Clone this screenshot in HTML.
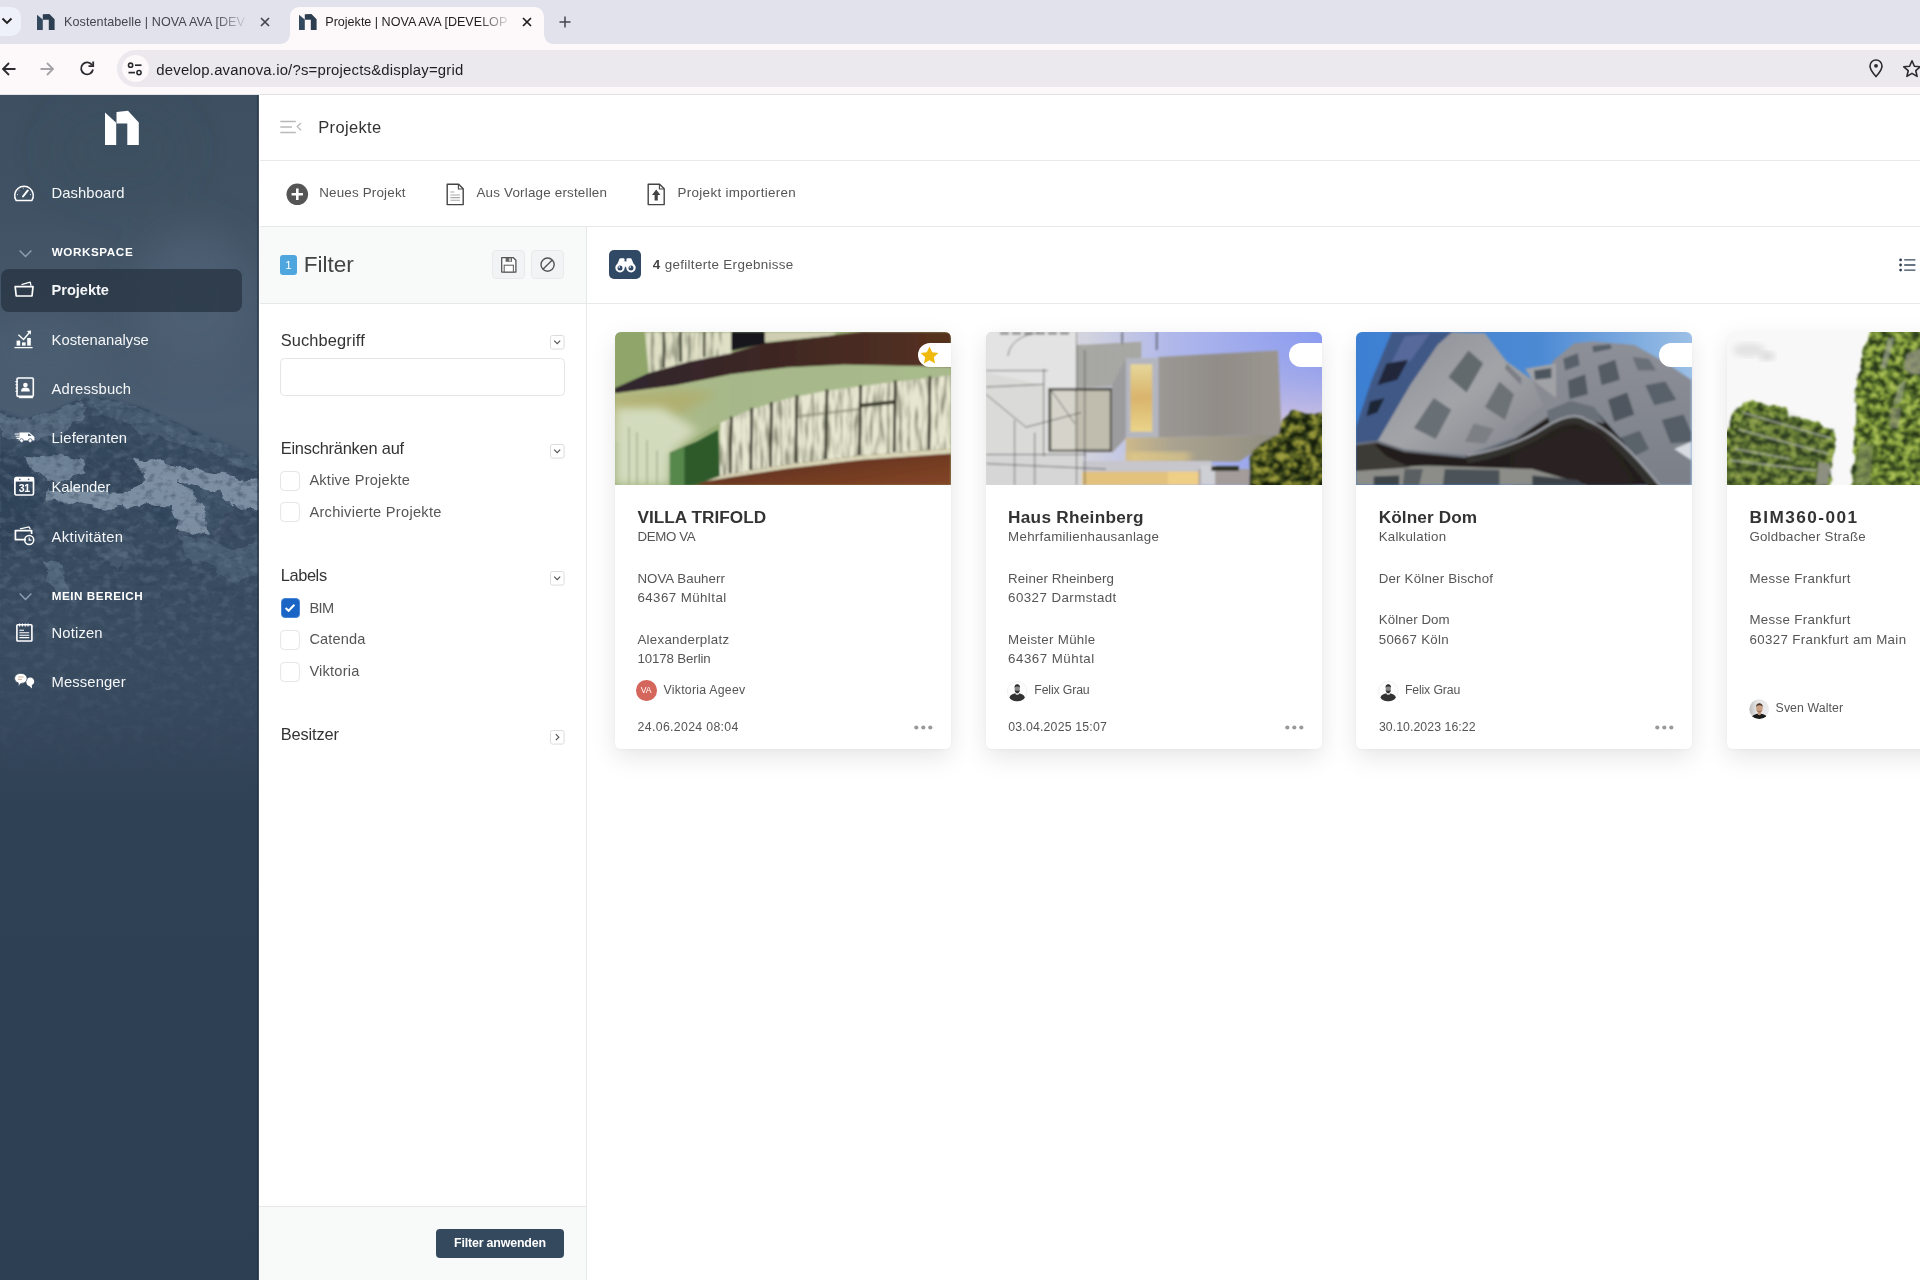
<!DOCTYPE html>
<html lang="de"><head><meta charset="utf-8"><title>Projekte | NOVA AVA [DEVELOP]</title>
<style>
*{box-sizing:border-box;margin:0;padding:0}
html,body{width:1920px;height:1280px;overflow:hidden;background:#fff}
body{position:relative;font-family:"Liberation Sans",sans-serif;color:#555}
.t{position:absolute;white-space:nowrap;line-height:1}
.a{position:absolute}
svg{position:absolute;overflow:visible}
#root{position:absolute;left:0;top:0;width:1920px;height:1280px;overflow:hidden;will-change:transform}

</style></head>
<body>
<div id="root">
<div class="a" style="left:0;top:0;width:1920px;height:44px;background:#e1e2ec"></div>
<div class="a" style="left:0;top:44px;width:1920px;height:51px;background:#fdf8fa;border-bottom:1px solid #e2e1e5"></div>
<div class="a" style="left:-20px;top:7px;width:41px;height:29px;border-radius:10px;background:#eef0fa"></div>
<svg style="left:1px;top:16px" width="12" height="10" viewBox="0 0 12 10"><path d="M1.5 2.5 L6 7 L10.5 2.5" fill="none" stroke="#1f1f1f" stroke-width="1.9"/></svg>
<svg style="left:280px;top:0" width="280" height="44" viewBox="0 0 280 44">
<path d="M0 44 C6 44 10 40 10 33 L10 17 C10 11 14 7 20 7 L254 7 C260 7 264 11 264 17 L264 33 C264 40 268 44 274 44 Z" fill="#fdf8fa"/></svg>
<svg style="left:37px;top:14px" width="18" height="16" viewBox="0 0 18 16">
<path d="M0 0.8 L5.8 5.6 L5.8 16 L0 16 Z" fill="#34495e"/>
<path d="M5.8 0.3 L12.4 0 L17.6 5.2 L17.6 16 L11.8 16 L11.8 5.8 L5.8 5.8 Z" fill="#2c3e50"/></svg>
<svg style="left:298.5px;top:14px" width="18" height="16" viewBox="0 0 18 16">
<path d="M0 0.8 L5.8 5.6 L5.8 16 L0 16 Z" fill="#34495e"/>
<path d="M5.8 0.3 L12.4 0 L17.6 5.2 L17.6 16 L11.8 16 L11.8 5.8 L5.8 5.8 Z" fill="#2c3e50"/></svg>
<div class="t" id="tab1" style="left:64.00px;top:16.00px;font-size:12.6px;font-weight:400;color:#44464d;letter-spacing:0.072px;">Kostentabelle | NOVA AVA [DEV</div>
<div class="a" style="left:215px;top:10px;width:34px;height:24px;background:linear-gradient(90deg,rgba(225,226,236,0),#e1e2ec)"></div>
<div class="t" id="tab2" style="left:325.30px;top:16.00px;font-size:12.6px;font-weight:400;color:#1f1f1f;letter-spacing:-0.017px;">Projekte | NOVA AVA [DEVELOP</div>
<div class="a" style="left:478px;top:10px;width:34px;height:24px;background:linear-gradient(90deg,rgba(253,248,250,0),#fdf8fa)"></div>
<svg style="left:260px;top:16.7px" width="10" height="10" viewBox="0 0 10 10"><path d="M1 1 L9 9 M9 1 L1 9" stroke="#44464d" stroke-width="1.7" fill="none"/></svg>
<svg style="left:521.7px;top:16.7px" width="10" height="10" viewBox="0 0 10 10"><path d="M1 1 L9 9 M9 1 L1 9" stroke="#1f1f1f" stroke-width="1.7" fill="none"/></svg>
<svg style="left:559px;top:16px" width="12" height="12" viewBox="0 0 12 12"><path d="M6 0.5 V11.5 M0.5 6 H11.5" stroke="#44464d" stroke-width="1.5" fill="none"/></svg>
<svg style="left:1px;top:61px" width="16" height="16" viewBox="0 0 16 16"><path d="M14.5 8 H2.5 M8 2 L2 8 L8 14" stroke="#2b2b2f" stroke-width="1.8" fill="none"/></svg>
<svg style="left:39px;top:61px" width="16" height="16" viewBox="0 0 16 16"><path d="M1.5 8 H13.5 M8 2 L14 8 L8 14" stroke="#a3a3a8" stroke-width="1.8" fill="none"/></svg>
<svg style="left:79px;top:60px" width="16" height="17" viewBox="0 0 16 17"><path d="M13.2 5.2 A6 6 0 1 0 14 9.5" stroke="#2b2b2f" stroke-width="1.8" fill="none"/><path d="M14.2 1.5 V6.2 H9.5" stroke="#2b2b2f" stroke-width="1.8" fill="none"/></svg>
<div class="a" style="left:117px;top:50px;width:1900px;height:37px;border-radius:18.5px;background:#ebe8ee"></div>
<div class="a" style="left:121.5px;top:55px;width:27px;height:27px;border-radius:50%;background:#fdf8fa"></div>
<svg style="left:127px;top:61px" width="16" height="16" viewBox="0 0 16 16">
<circle cx="3.6" cy="4.2" r="2.1" fill="none" stroke="#2b2b2f" stroke-width="1.6"/><path d="M8 4.2 H14.5" stroke="#2b2b2f" stroke-width="1.7"/>
<circle cx="12" cy="11.6" r="2.1" fill="none" stroke="#2b2b2f" stroke-width="1.6"/><path d="M1.5 11.6 H8" stroke="#2b2b2f" stroke-width="1.7"/></svg>
<div class="t" id="url" style="left:156.30px;top:63.00px;font-size:14.9px;font-weight:400;color:#1f1f1f;letter-spacing:0.194px;">develop.avanova.io/?s=projects&amp;display=grid</div>
<svg style="left:1869px;top:59px" width="14" height="19" viewBox="0 0 14 19">
<path d="M7 1 C3.6 1 1 3.6 1 7 C1 11 7 17.5 7 17.5 C7 17.5 13 11 13 7 C13 3.6 10.4 1 7 1 Z" fill="none" stroke="#2b2b2f" stroke-width="1.6"/><circle cx="7" cy="6.8" r="1.9" fill="#2b2b2f"/></svg>
<svg style="left:1902px;top:59px" width="20" height="19" viewBox="0 0 20 19">
<path d="M10 1.8 L12.4 7.2 L18.2 7.8 L13.8 11.7 L15.1 17.4 L10 14.4 L4.9 17.4 L6.2 11.7 L1.8 7.8 L7.6 7.2 Z" fill="none" stroke="#2b2b2f" stroke-width="1.6" stroke-linejoin="round"/></svg>
<svg style="left:0;top:95px;overflow:hidden" width="258.7" height="1185" viewBox="0 95 259 1185" preserveAspectRatio="none">
<defs>
<linearGradient id="sbg" gradientUnits="userSpaceOnUse" x1="0" y1="95" x2="0" y2="1280">
<stop offset="0" stop-color="#3d4f60"/><stop offset="0.08" stop-color="#3f5162"/><stop offset="0.2" stop-color="#46586b"/>
<stop offset="0.27" stop-color="#4b5e71"/><stop offset="0.5" stop-color="#384a5e"/><stop offset="0.6" stop-color="#2f4155"/><stop offset="1" stop-color="#2d3f52"/>
</linearGradient>
<linearGradient id="mfade" gradientUnits="userSpaceOnUse" x1="0" y1="380" x2="0" y2="780">
<stop offset="0" stop-color="#fff" stop-opacity="1"/><stop offset="0.45" stop-color="#fff" stop-opacity="0.95"/><stop offset="0.72" stop-color="#fff" stop-opacity="0.45"/><stop offset="1" stop-color="#fff" stop-opacity="0"/></linearGradient>
<mask id="mmask" maskUnits="userSpaceOnUse" x="0" y="95" width="259" height="1185"><rect x="0" y="95" width="259" height="1185" fill="url(#mfade)"/></mask>
<filter id="b1" x="-20%" y="-20%" width="140%" height="140%"><feGaussianBlur stdDeviation="0.8"/></filter>
<filter id="b2" x="-20%" y="-20%" width="140%" height="140%"><feGaussianBlur stdDeviation="1.4"/></filter>
<filter id="rough" x="-10%" y="-10%" width="120%" height="120%"><feTurbulence type="fractalNoise" baseFrequency="0.06 0.08" numOctaves="3" seed="8" result="t"/><feDisplacementMap in="SourceGraphic" in2="t" scale="14" xChannelSelector="R" yChannelSelector="G"/><feGaussianBlur stdDeviation="0.7"/></filter>
<filter id="b14" x="-30%" y="-30%" width="160%" height="160%"><feGaussianBlur stdDeviation="18"/></filter>
<filter color-interpolation-filters="sRGB" id="mlight" x="0" y="0" width="100%" height="100%"><feTurbulence type="fractalNoise" baseFrequency="0.09 0.12" numOctaves="3" seed="11"/>
<feColorMatrix type="matrix" values="0 0 0 0 0.55  0 0 0 0 0.63  0 0 0 0 0.71  3.4 0 0 0 -1.6"/><feComposite in2="SourceGraphic" operator="in"/></filter>
<filter color-interpolation-filters="sRGB" id="mdark" x="0" y="0" width="100%" height="100%"><feTurbulence type="fractalNoise" baseFrequency="0.11 0.15" numOctaves="3" seed="23"/>
<feColorMatrix type="matrix" values="0 0 0 0 0.17  0 0 0 0 0.24  0 0 0 0 0.32  -3.4 0 0 0 1.7"/><feComposite in2="SourceGraphic" operator="in"/></filter>
</defs>
<rect x="0" y="95" width="259" height="1185" fill="url(#sbg)"/>
<g filter="url(#b14)">
<ellipse cx="195" cy="300" rx="60" ry="70" fill="#506276" opacity="0.75"/>
<ellipse cx="120" cy="150" rx="70" ry="50" fill="#3a4c5f" opacity="0.3"/>
<ellipse cx="40" cy="350" rx="60" ry="35" fill="#4f6175" opacity="0.5"/>
</g>
<g mask="url(#mmask)">
<polygon points="0.0,409.7 9.4,413.6 23.4,419.1 39.1,415.9 62.5,406.6 78.1,399.5 87.5,396.9 100.0,397.5 109.4,398.8 140.6,406.6 171.9,420.6 203.1,434.7 234.4,447.2 260.0,462.0 260.0,848.8 0.0,848.8" fill="#394c61" filter="url(#b1)"/>
<g filter="url(#rough)">
<polygon points="0.0,411.2 9.4,414.7 23.4,420.3 39.1,417.5 62.5,408.1 81.2,400.3 87.5,403.4 81.2,420.6 62.5,431.6 39.1,439.4 15.6,442.5 0.0,431.6" fill="#596c81" opacity="0.85"/>
<polygon points="87.5,398.0 109.4,399.7 140.6,407.8 171.9,421.9 203.1,435.9 234.4,448.4 260.0,462.8 260.0,473.8 226.6,461.2 195.3,448.8 164.1,439.4 132.8,426.9 109.4,415.9 93.8,409.7" fill="#4b5e73" opacity="0.8"/>
<polygon points="25.0,453.4 62.5,458.1 87.5,461.2 84.4,473.8 46.9,480.0 31.2,470.6" fill="#75889c" opacity="0.9"/>
<polygon points="134.4,456.6 171.9,464.4 218.8,473.8 260.0,480.0 260.0,511.2 234.4,505.0 221.9,520.6 206.2,536.2 179.7,530.0 171.9,509.7 150.0,505.0 109.4,508.1 70.3,503.4 43.8,500.3 46.9,489.4 93.8,492.5 125.0,492.5 148.4,480.0 140.6,467.5" fill="#8496a9" opacity="0.92"/>
<polygon points="179.7,480.0 218.8,492.5 234.4,508.1 226.6,536.2 207.8,534.7 201.6,505.0" fill="#3b4e63" opacity="0.95"/>
<polygon points="150.0,506.6 171.9,505.0 176.6,520.6 168.8,530.0 154.7,525.3" fill="#33465b"/>
<polygon points="0.0,451.9 21.9,455.0 34.4,480.0 40.6,501.9 31.2,533.1 0.0,551.9" fill="#2f4257" opacity="0.75"/>
<polygon points="87.5,419.1 109.4,426.9 134.4,455.0 146.9,480.0 125.0,492.5 100.0,489.4 87.5,461.2 81.2,442.5" fill="#334659" opacity="0.7"/>
<polygon points="43.8,559.7 62.5,564.4 65.6,580.0 75.0,598.8 62.5,598.8 46.9,576.9" fill="#5b6e83" opacity="0.85"/>
<polygon points="179.7,536.2 207.8,537.8 234.4,551.9 260.0,536.2 260.0,575.3 234.4,583.1 210.9,567.5 187.5,559.7" fill="#53667b" opacity="0.7"/>
<polygon points="93.8,548.8 125.0,536.2 140.6,551.9 118.8,570.6" fill="#4e6176" opacity="0.6"/>
</g>
<polygon points="0.0,409.7 9.4,413.6 23.4,419.1 39.1,415.9 62.5,406.6 78.1,399.5 87.5,396.9 100.0,397.5 109.4,398.8 140.6,406.6 171.9,420.6 203.1,434.7 234.4,447.2 260.0,462.0 260.0,848.8 0.0,848.8" fill="#000" filter="url(#mdark)" opacity="0.4"/>
<polygon points="0.0,409.7 9.4,413.6 23.4,419.1 39.1,415.9 62.5,406.6 78.1,399.5 87.5,396.9 100.0,397.5 109.4,398.8 140.6,406.6 171.9,420.6 203.1,434.7 234.4,447.2 260.0,462.0 260.0,848.8 0.0,848.8" fill="#000" filter="url(#mlight)" opacity="0.22"/>
</g>
</svg>
<div class="a" style="left:257.4px;top:95px;width:1.3px;height:1185px;background:rgba(30,42,60,0.55)"></div>
<svg style="left:100px;top:108px" width="44" height="40" viewBox="100 108 44 40">
<path d="M105 112.6 L116.2 122.8 L116.2 145.1 L105 145.1 Z" fill="#fff"/>
<path d="M116.5 112 L128 110.8 L138.8 122.5 L138.8 145.1 L127.3 145.1 L127.3 123.6 L116.5 123.6 Z" fill="#fff"/></svg>
<div class="a" style="left:1px;top:268.7px;width:241px;height:43.3px;border-radius:8px;background:rgba(40,52,66,0.78)"></div>
<div class="t" id="nDash" style="left:51.50px;top:186.00px;font-size:14.8px;font-weight:400;color:#f4f6f8;letter-spacing:0.076px;">Dashboard</div>
<div class="t" id="nWs" style="left:51.70px;top:246.00px;font-size:11.7px;font-weight:700;color:#fff;letter-spacing:0.574px;">WORKSPACE</div>
<div class="t" id="nProj" style="left:51.50px;top:283.00px;font-size:14.6px;font-weight:700;color:#f4f6f8;letter-spacing:-0.015px;">Projekte</div>
<div class="t" id="nKost" style="left:51.50px;top:333.00px;font-size:14.8px;font-weight:400;color:#f4f6f8;letter-spacing:0.018px;">Kostenanalyse</div>
<div class="t" id="nAdr" style="left:51.50px;top:382.00px;font-size:14.8px;font-weight:400;color:#f4f6f8;letter-spacing:0.162px;">Adressbuch</div>
<div class="t" id="nLief" style="left:51.50px;top:431.00px;font-size:14.8px;font-weight:400;color:#f4f6f8;letter-spacing:0.145px;">Lieferanten</div>
<div class="t" id="nKal" style="left:51.50px;top:480.00px;font-size:14.8px;font-weight:400;color:#f4f6f8;letter-spacing:-0.048px;">Kalender</div>
<div class="t" id="nAkt" style="left:51.50px;top:530.00px;font-size:14.8px;font-weight:400;color:#f4f6f8;letter-spacing:0.333px;">Aktivitäten</div>
<div class="t" id="nMb" style="left:51.70px;top:590.00px;font-size:11.7px;font-weight:700;color:#fff;letter-spacing:0.539px;">MEIN BEREICH</div>
<div class="t" id="nNot" style="left:51.50px;top:626.00px;font-size:14.8px;font-weight:400;color:#f4f6f8;letter-spacing:0.153px;">Notizen</div>
<div class="t" id="nMes" style="left:51.50px;top:675.00px;font-size:14.8px;font-weight:400;color:#f4f6f8;letter-spacing:0.112px;">Messenger</div>
<svg style="left:19.2px;top:249.6px" width="13" height="7.5" viewBox="0 0 13 7.5"><path d="M0.6 0.6 L6.5 6.4 L12.4 0.6" fill="none" stroke="#8fa0b2" stroke-width="1.4"/></svg>
<svg style="left:19.2px;top:593px" width="13" height="7.5" viewBox="0 0 13 7.5"><path d="M0.6 0.6 L6.5 6.4 L12.4 0.6" fill="none" stroke="#8fa0b2" stroke-width="1.4"/></svg>
<svg style="left:13px;top:184px" width="22" height="18" viewBox="0 0 22 18">
<path d="M3.2 16.6 A9.3 9.3 0 1 1 18.8 16.6 Z" fill="none" stroke="#fff" stroke-width="1.5" stroke-linejoin="round"/>
<path d="M10 12.5 L14.6 6.6" stroke="#fff" stroke-width="2" stroke-linecap="round"/>
<path d="M4 10.5 L5 10.7 M5.6 6.2 L6.4 6.9 M10.3 3.6 L10.4 4.6 M16 6 L15.4 6.7 M18 10.5 L17 10.7" stroke="#fff" stroke-width="1" opacity="0.8"/></svg>
<svg style="left:13.5px;top:280.5px" width="21" height="16.5" viewBox="0 0 21 16.5">
<path d="M1.2 5.6 H19 L18 15 H2.2 Z" fill="none" stroke="#fff" stroke-width="1.7" stroke-linejoin="round"/>
<path d="M7.5 3.6 L16.2 1.2 L17 4.6" fill="none" stroke="#fff" stroke-width="1.3" stroke-linejoin="round"/></svg>
<svg style="left:14px;top:329.5px" width="20" height="19" viewBox="0 0 20 19">
<path d="M0.5 17.6 H18.6" stroke="#fff" stroke-width="1.3"/>
<rect x="2.6" y="10.6" width="3.6" height="5" fill="#fff"/><rect x="8" y="12.4" width="3.6" height="3.2" fill="#fff"/><rect x="13.2" y="8" width="3.6" height="7.6" fill="#fff"/>
<path d="M4.4 4.8 L9.6 9.4 L16 1.8" fill="none" stroke="#fff" stroke-width="1.4"/><path d="M12.8 1 L17 0.6 L16.8 4.8 Z" fill="#fff"/></svg>
<svg style="left:14.5px;top:377.3px" width="19.5" height="21.5" viewBox="0 0 19.5 21.5">
<rect x="2" y="1" width="16.3" height="18.4" rx="1.2" fill="none" stroke="#fff" stroke-width="1.6"/>
<path d="M0.4 4.6 H3 M0.4 7.8 H3 M0.4 11 H3 M0.4 14.2 H3" stroke="#fff" stroke-width="1.1"/>
<circle cx="10.4" cy="8" r="2.3" fill="#fff"/><path d="M6 14.4 C6 11.6 8 10.6 10.4 10.6 C12.8 10.6 14.8 11.6 14.8 14.4 Z" fill="#fff"/>
<path d="M4 20.6 H18" stroke="#fff" stroke-width="1.2"/></svg>
<svg style="left:13.5px;top:431.6px" width="21" height="11" viewBox="0 0 21 11">
<path d="M5.4 0.6 H15.4 L19.4 4 L20.4 5 V8.4 H4.4 L5.4 5 Z" fill="#fff"/>
<path d="M0.6 2 H5 M1.6 4.2 H5.4 M2.6 6.4 H5" stroke="#fff" stroke-width="1.1"/>
<circle cx="7.6" cy="8.6" r="1.9" fill="#fff" stroke="#4a5d72" stroke-width="0.8"/><circle cx="16.2" cy="8.6" r="1.9" fill="#fff" stroke="#4a5d72" stroke-width="0.8"/>
<path d="M14 1.8 H15.4 L17.6 4 H14 Z" fill="#56697d"/></svg>
<svg style="left:13.8px;top:476.3px" width="20.5" height="20.5" viewBox="0 0 20.5 20.5">
<rect x="0.9" y="1.6" width="18.6" height="17.4" rx="1.4" fill="none" stroke="#fff" stroke-width="1.7"/>
<rect x="0.9" y="1.6" width="18.6" height="4" fill="#fff"/>
<circle cx="5.8" cy="3.4" r="0.8" fill="#4a5d72"/><circle cx="14.6" cy="3.4" r="0.8" fill="#4a5d72"/>
<text x="10.2" y="16" font-family="Liberation Sans, sans-serif" font-size="10.5" font-weight="700" fill="#fff" text-anchor="middle" letter-spacing="-0.3">31</text></svg>
<svg style="left:13.8px;top:525.8px" width="21" height="20" viewBox="0 0 21 20">
<path d="M12 13.6 H1.4 V4.6 H17.6 V8" fill="none" stroke="#fff" stroke-width="1.7" stroke-linejoin="round"/>
<path d="M6 2.8 L15 1 L16.4 3.4" fill="none" stroke="#fff" stroke-width="1.2"/>
<circle cx="15.2" cy="14" r="4.5" fill="none" stroke="#fff" stroke-width="1.5"/>
<path d="M15.2 11.4 V14.2 H17.4" fill="none" stroke="#fff" stroke-width="1.2"/></svg>
<svg style="left:15.5px;top:623.4px" width="17" height="19" viewBox="0 0 17 19">
<rect x="0.9" y="1.8" width="15" height="16.2" rx="0.8" fill="none" stroke="#fff" stroke-width="1.6"/>
<path d="M3.6 0.4 V3.4 M6.4 0.4 V3.4 M9.2 0.4 V3.4 M12 0.4 V3.4" stroke="#fff" stroke-width="1.1"/>
<path d="M3.4 7.2 H8 M3.4 9.8 H13.2 M3.4 12.2 H13.2 M3.4 14.6 H13.2" stroke="#fff" stroke-width="1.1"/></svg>
<svg style="left:14px;top:673.2px" width="20.5" height="17.5" viewBox="0 0 20.5 17.5">
<path d="M12.2 8.2 C12.2 5.6 14 4.4 16.2 4.4 C18.6 4.4 20.2 6.2 20.2 8.6 C20.2 10.4 19.2 11.6 17.8 12.3 L18 15.6 L15.2 13 C13.4 12.8 12.2 10.6 12.2 8.2 Z" fill="#fff"/>
<path d="M0.6 5.4 C0.6 2.4 3.2 0.4 6.8 0.4 C10.4 0.4 13 2.4 13 5.4 C13 8.4 10.4 10.4 6.8 10.4 L4.4 13.4 L4.2 9.8 C2 9.2 0.6 7.4 0.6 5.4 Z" fill="#fff" stroke="#3a4c60" stroke-width="0.8"/>
<path d="M4 4 H9.6 M4 6.4 H8" stroke="#c9a98a" stroke-width="0.9"/></svg>
<div class="a" style="left:259.6px;top:159.8px;width:1661px;height:1px;background:#e7e8e9"></div>
<div class="a" style="left:259.6px;top:225.5px;width:1661px;height:1px;background:#e7e8e9"></div>
<div class="a" style="left:259px;top:226.5px;width:327.3px;height:77px;background:#f8faf9"></div>
<div class="a" style="left:259.6px;top:303.1px;width:1661px;height:1px;background:#e7e8e9"></div>
<div class="a" style="left:586.3px;top:226.5px;width:1px;height:1054px;background:#e7e8e9"></div>
<div class="a" style="left:259px;top:1206px;width:327.3px;height:74px;background:#f8faf9;border-top:1px solid #e7e8e9"></div>
<div class="a" style="left:436px;top:1229px;width:128px;height:29px;border-radius:4px;background:#34495e"></div>
<div class="t" id="bApply" style="left:454.00px;top:1237.00px;font-size:12.4px;font-weight:700;color:#fff;letter-spacing:-0.167px;">Filter anwenden</div>
<svg style="left:280px;top:120px" width="22" height="14" viewBox="0 0 22 14">
<path d="M0.3 1.5 H15.8 M0.3 7 H12 M0.3 12.5 H15.8" stroke="#b9b9b9" stroke-width="1.3" fill="none"/>
<path d="M21 3 L17.2 6.6 L21 10.2" stroke="#b9b9b9" stroke-width="1.3" fill="none"/></svg>
<div class="t" id="hTitle" style="left:318.20px;top:119.00px;font-size:16.5px;font-weight:400;color:#333;letter-spacing:0.351px;">Projekte</div>
<svg style="left:286px;top:183px" width="23" height="23" viewBox="0 0 23 23">
<circle cx="11.3" cy="11.3" r="10.8" fill="#555"/><path d="M11.3 5.6 V17 M5.6 11.3 H17" stroke="#fff" stroke-width="2.6"/></svg>
<div class="t" id="tbNew" style="left:319.20px;top:186.00px;font-size:13.4px;font-weight:400;color:#555;letter-spacing:0.183px;">Neues Projekt</div>
<svg style="left:445.5px;top:183px" width="18.5" height="23" viewBox="0 0 18.5 23">
<path d="M1.2 1.2 H12.6 L17.2 5.8 V21.6 H1.2 Z" fill="#fff" stroke="#444" stroke-width="1.4" stroke-linejoin="round"/>
<path d="M12.4 1.4 V6 H17" fill="none" stroke="#444" stroke-width="1.1"/>
<path d="M4.4 9 H8.4 M4.4 12 H14 M4.4 14.6 H14 M4.4 17.2 H14" stroke="#aaa" stroke-width="1.1"/></svg>
<div class="t" id="tbTpl" style="left:476.50px;top:186.00px;font-size:13.4px;font-weight:400;color:#555;letter-spacing:0.193px;">Aus Vorlage erstellen</div>
<svg style="left:646.8px;top:183px" width="18.5" height="23" viewBox="0 0 18.5 23">
<path d="M1.2 1.2 H12.6 L17.2 5.8 V21.6 H1.2 Z" fill="#fff" stroke="#444" stroke-width="1.4" stroke-linejoin="round"/>
<path d="M12.4 1.4 V6 H17" fill="none" stroke="#444" stroke-width="1.1"/>
<path d="M9.2 6.6 L13.4 12 H10.8 V17.6 H7.6 V12 H5 Z" fill="#444"/></svg>
<div class="t" id="tbImp" style="left:677.50px;top:186.00px;font-size:13.4px;font-weight:400;color:#555;letter-spacing:0.328px;">Projekt importieren</div>
<div class="a" style="left:280.2px;top:254.8px;width:16.8px;height:19.8px;border-radius:3px;background:#4fa5de"></div>
<div class="t" id="fBadge" style="left:285.30px;top:260.00px;font-size:11.5px;font-weight:400;color:#fff;letter-spacing:0.000px;">1</div>
<div class="t" id="fTitle" style="left:303.70px;top:254.00px;font-size:22.6px;font-weight:400;color:#444;letter-spacing:-0.043px;">Filter</div>
<div class="a" style="left:492.4px;top:250.2px;width:32.2px;height:28.8px;border-radius:4px;background:#f1f3f4;border:1px solid #e8eaeb"></div>
<div class="a" style="left:531.4px;top:250.2px;width:32.6px;height:28.8px;border-radius:4px;background:#f1f3f4;border:1px solid #e8eaeb"></div>
<svg style="left:500.6px;top:256.6px" width="15.6" height="15.8" viewBox="0 0 15.6 15.8">
<path d="M0.7 0.7 H12.4 L14.9 3.2 V15.1 H0.7 Z" fill="#fff" stroke="#555" stroke-width="1.3" stroke-linejoin="round"/>
<rect x="3.2" y="8.2" width="9.2" height="6.8" fill="#fff" stroke="#666" stroke-width="1.1"/>
<rect x="4.6" y="0.9" width="6.4" height="3.9" fill="#666"/><rect x="8.2" y="1.4" width="1.6" height="2.8" fill="#ddd"/></svg>
<svg style="left:539.8px;top:257px" width="15.2" height="15.2" viewBox="0 0 15.2 15.2">
<circle cx="7.6" cy="7.6" r="6.6" fill="none" stroke="#555" stroke-width="1.4"/><path d="M2.9 12.3 L12.3 2.9" stroke="#555" stroke-width="1.4"/></svg>
<div class="a" style="left:609.2px;top:250px;width:32px;height:29.4px;border-radius:5px;background:#304a66"></div>
<svg style="left:614.6px;top:258px" width="21" height="14.6" viewBox="0 0 21 14.6">
<path d="M5.6 0.3 H8.6 C9.2 0.3 9.5 0.7 9.5 1.3 V9.6 H1 L4.2 1.4 C4.5 0.7 4.9 0.3 5.6 0.3 Z" fill="#fff"/>
<path d="M15.4 0.3 H12.4 C11.8 0.3 11.5 0.7 11.5 1.3 V9.6 H20 L16.8 1.4 C16.5 0.7 16.1 0.3 15.4 0.3 Z" fill="#fff"/>
<rect x="9" y="3.4" width="3" height="6" fill="#fff"/>
<circle cx="5" cy="9.8" r="4.7" fill="#fff"/><circle cx="16" cy="9.8" r="4.7" fill="#fff"/>
<circle cx="5" cy="9.9" r="2.5" fill="#304a66"/><circle cx="16" cy="9.9" r="2.5" fill="#304a66"/>
<circle cx="4.2" cy="9.1" r="0.8" fill="#fff"/><circle cx="15.2" cy="9.1" r="0.8" fill="#fff"/><circle cx="10.5" cy="9.2" r="0.6" fill="#304a66"/></svg>
<div class="t" id="rCount" style="left:652.80px;top:258.00px;font-size:13.4px;font-weight:400;color:#555;letter-spacing:0.330px;"><b style="color:#444">4</b> gefilterte Ergebnisse</div>
<svg style="left:1899px;top:257.6px" width="17" height="14" viewBox="0 0 17 14">
<circle cx="1.6" cy="1.9" r="1.4" fill="#2c3e50"/><circle cx="1.6" cy="7" r="1.4" fill="#2c3e50"/><circle cx="1.6" cy="12.1" r="1.4" fill="#2c3e50"/>
<path d="M5.2 1.9 H16.4 M5.2 7 H16.4 M5.2 12.1 H16.4" stroke="#34495e" stroke-width="1.3"/></svg>
<div class="t" id="fs1" style="left:280.70px;top:332.00px;font-size:16.4px;font-weight:400;color:#333;letter-spacing:0.138px;">Suchbegriff</div>
<svg style="left:550.2px;top:335.2px" width="14.6" height="14.6" viewBox="0 0 14.6 14.6">
<rect x="0.5" y="0.5" width="13.6" height="13.6" rx="2" fill="#fff" stroke="#dcdcdc"/><path d="M4.2 5.6 L7.2 8.6 L10.2 5.6" fill="none" stroke="#555" stroke-width="1.2"/></svg>
<div class="a" style="left:280.2px;top:358px;width:284.6px;height:38.4px;border-radius:4.5px;background:#fff;border:1px solid #e4e5e6"></div>
<div class="t" id="fs2" style="left:280.70px;top:440.00px;font-size:16.4px;font-weight:400;color:#333;letter-spacing:-0.217px;">Einschränken auf</div>
<svg style="left:550.2px;top:443.6px" width="14.6" height="14.6" viewBox="0 0 14.6 14.6">
<rect x="0.5" y="0.5" width="13.6" height="13.6" rx="2" fill="#fff" stroke="#dcdcdc"/><path d="M4.2 5.6 L7.2 8.6 L10.2 5.6" fill="none" stroke="#555" stroke-width="1.2"/></svg>
<div class="a" style="left:280.2px;top:470.5px;width:20.2px;height:20px;border-radius:4.5px;background:#fff;border:1px solid #e6e6e6;box-shadow:0 0 1px rgba(0,0,0,0.06)"></div>
<div class="t" id="fo1" style="left:309.40px;top:473.00px;font-size:14.6px;font-weight:400;color:#555;letter-spacing:0.219px;">Aktive Projekte</div>
<div class="a" style="left:280.2px;top:502.4px;width:20.2px;height:20px;border-radius:4.5px;background:#fff;border:1px solid #e6e6e6;box-shadow:0 0 1px rgba(0,0,0,0.06)"></div>
<div class="t" id="fo2" style="left:309.40px;top:505.00px;font-size:14.6px;font-weight:400;color:#555;letter-spacing:0.288px;">Archivierte Projekte</div>
<div class="t" id="fs3" style="left:280.70px;top:567.00px;font-size:16.4px;font-weight:400;color:#333;letter-spacing:-0.383px;">Labels</div>
<svg style="left:550.2px;top:571.2px" width="14.6" height="14.6" viewBox="0 0 14.6 14.6">
<rect x="0.5" y="0.5" width="13.6" height="13.6" rx="2" fill="#fff" stroke="#dcdcdc"/><path d="M4.2 5.6 L7.2 8.6 L10.2 5.6" fill="none" stroke="#555" stroke-width="1.2"/></svg>
<div class="a" style="left:280.6px;top:598.4px;width:19.6px;height:19.2px;border-radius:4px;background:#1a64c6;border:1px solid #4a86d6"></div>
<svg style="left:284.4px;top:603.1999999999999px" width="12" height="10" viewBox="0 0 12 10"><path d="M1.6 5 L4.6 7.8 L10.4 1.8" fill="none" stroke="#fff" stroke-width="2"/></svg>
<div class="t" id="fo3" style="left:309.40px;top:601.00px;font-size:14.6px;font-weight:400;color:#555;letter-spacing:-0.578px;">BIM</div>
<div class="a" style="left:280.2px;top:629.6px;width:20.2px;height:20px;border-radius:4.5px;background:#fff;border:1px solid #e6e6e6;box-shadow:0 0 1px rgba(0,0,0,0.06)"></div>
<div class="t" id="fo4" style="left:309.40px;top:632.00px;font-size:14.6px;font-weight:400;color:#555;letter-spacing:0.137px;">Catenda</div>
<div class="a" style="left:280.2px;top:661.5px;width:20.2px;height:20px;border-radius:4.5px;background:#fff;border:1px solid #e6e6e6;box-shadow:0 0 1px rgba(0,0,0,0.06)"></div>
<div class="t" id="fo5" style="left:309.40px;top:664.00px;font-size:14.6px;font-weight:400;color:#555;letter-spacing:0.228px;">Viktoria</div>
<div class="t" id="fs4" style="left:280.70px;top:726.00px;font-size:16.4px;font-weight:400;color:#333;letter-spacing:-0.117px;">Besitzer</div>
<svg style="left:550.2px;top:730.4px" width="14.6" height="14.6" viewBox="0 0 14.6 14.6">
<rect x="0.5" y="0.5" width="13.6" height="13.6" rx="2" fill="#fff" stroke="#dcdcdc"/><path d="M5.8 4.2 L8.8 7.2 L5.8 10.2" fill="none" stroke="#555" stroke-width="1.2"/></svg>
<div class="a" style="left:615px;top:332px;width:336px;height:417.20000000000005px;border-radius:6px;background:#fff;box-shadow:0 8px 26px rgba(0,0,0,0.10),0 1px 4px rgba(0,0,0,0.04)"></div>
<div class="a" style="left:615px;top:332px;width:336px;height:152.6px;border-radius:6px 6px 0 0;overflow:hidden"><svg style="left:0;top:0" width="336" height="153" viewBox="0 0 336 153">
<defs><filter id="i1b"><feGaussianBlur stdDeviation="0.9"/></filter><filter id="i1c"><feGaussianBlur stdDeviation="5"/></filter>
<filter color-interpolation-filters="sRGB" id="i1n" x="0" y="0" width="100%" height="100%"><feTurbulence type="fractalNoise" baseFrequency="0.25 0.035" numOctaves="2" seed="4"/><feColorMatrix type="matrix" values="0 0 0 0 0.45  0 0 0 0 0.46  0 0 0 0 0.38  3.5 0 0 0 -1.55"/><feComposite in2="SourceGraphic" operator="in"/></filter>
<linearGradient id="i1g1" x1="0" y1="0" x2="1" y2="0"><stop offset="0" stop-color="#30252f"/><stop offset="0.5" stop-color="#3f2823"/><stop offset="1" stop-color="#57311f"/></linearGradient>
<linearGradient id="i1g2" x1="0" y1="0" x2="1" y2="1"><stop offset="0" stop-color="#52291a"/><stop offset="1" stop-color="#854627"/></linearGradient>
<linearGradient id="i1g3" x1="0" y1="0" x2="1" y2="0"><stop offset="0" stop-color="#b3ba86"/><stop offset="0.35" stop-color="#a6b88a"/><stop offset="1" stop-color="#a9bb8c"/></linearGradient>
</defs>
<rect width="336" height="153" fill="#97ab74"/>
<g filter="url(#i1b)">
<polygon points="0.0,0.0 41.3,0.0 33.8,39.9 0.0,56.8" fill="#8fa56a"/>
<polygon points="30.0,0.0 116.3,0.0 116.3,22.1 75.0,29.6 33.8,40.9" fill="#dfe0c6"/>
<polygon points="30.0,0.0 116.3,0.0 116.3,22.1 75.0,29.6 33.8,40.9" fill="#000" filter="url(#i1n)" opacity="0.7"/>
<path d="M48.8 0 V36 M65.6 0 V30 M89.1 0 V25" stroke="#2e3524" stroke-width="2.4"/>
<polygon points="116.3,0.0 150.0,0.0 150.0,11.8 116.3,18.4" fill="#14141a"/>
<polygon points="150.0,0.0 221.3,0.0 217.5,3.4 150.0,9.9" fill="#cfcdb2"/>
<polygon points="0.0,55.9 33.8,40.9 75.0,29.6 116.3,21.2 150.0,10.9 217.5,3.4 247.5,0.0 336.0,0.0 336.0,35.3 228.8,32.8 172.5,35.6 116.3,42.2 60.0,53.4 0.0,61.5" fill="url(#i1g1)"/>
<polygon points="0.0,61.5 60.0,53.4 116.3,42.2 172.5,35.6 228.8,32.8 336.0,34.7 336.0,43.3 266.3,51.6 210.0,59.1 172.5,66.6 135.0,77.8 105.0,90.9 78.8,105.9 54.4,120.9 0.0,109.3" fill="url(#i1g3)"/>
<polygon points="0.0,66.2 63.8,58.7 101.3,60.6 63.8,83.1 0.0,90.6" fill="#b2a95e" opacity="0.55" filter="url(#i1c)"/>
<polygon points="105.0,90.9 135.0,77.8 172.5,66.6 210.0,59.1 266.3,51.6 336.0,43.3 336.0,116.8 247.5,123.4 172.5,132.8 105.0,144.0" fill="#e7e6d0"/>
<polygon points="105.0,90.9 135.0,77.8 172.5,66.6 210.0,59.1 266.3,51.6 336.0,43.3 336.0,116.8 247.5,123.4 172.5,132.8 105.0,144.0" fill="#000" filter="url(#i1n)" opacity="0.7"/>
<polygon points="245.6,71.8 280.3,68.1 280.3,71.8 245.6,75.6" fill="#3a3a2c"/>
<polygon points="181.9,83.1 245.6,75.6 245.6,78.4 181.9,85.9" fill="#8a8a74" opacity="0.6"/>
<path d="M116.3 84.6 L115.1 141.2" stroke="#2b2a1e" stroke-width="2.7"/><path d="M136.9 75.9 L135.7 137.8" stroke="#2b2a1e" stroke-width="2.7"/><path d="M156.6 70.0 L155.4 134.5" stroke="#2b2a1e" stroke-width="2.7"/><path d="M181.9 63.3 L180.7 130.6" stroke="#2b2a1e" stroke-width="2.7"/><path d="M211.9 57.4 L210.7 126.9" stroke="#2b2a1e" stroke-width="2.7"/><path d="M245.6 52.9 L244.4 122.7" stroke="#2b2a1e" stroke-width="2.7"/><path d="M280.3 48.5 L279.1 120.0" stroke="#2b2a1e" stroke-width="2.7"/><path d="M315.0 44.3 L313.8 117.4" stroke="#2b2a1e" stroke-width="2.7"/>
<polygon points="78.8,153.4 105.0,144.0 172.5,132.8 247.5,123.4 336.0,116.8 336.0,153.4" fill="url(#i1g2)"/>
<polygon points="90.0,149.6 105.0,144.0 172.5,132.8 247.5,123.4 336.0,116.8 336.0,121.5 247.5,127.7 172.5,136.5 116.3,144.9" fill="#d9d6b8"/>
<polygon points="0.0,75.6 46.9,75.6 82.5,98.1 56.3,120.6 54.4,153.4 0.0,153.4" fill="#d3dbbd" filter="url(#i1c)"/>
<polygon points="54.8,120.6 82.5,109.3 103.1,98.1 105.0,144.0 78.8,153.4 54.8,153.4" fill="#2d5a2c"/>
<polygon points="54.8,120.6 69.4,114.9 69.4,153.4 54.8,153.4" fill="#6a9a58" opacity="0.7"/>
<path d="M14 95 V153 M22 100 V153 M32 108 V153 M42 118 V153" stroke="#9fae88" stroke-width="2" opacity="0.6"/>
</g>
</svg><div class="a" style="left:303.2px;top:10.8px;width:60px;height:24px;border-radius:12px;background:#fff"></div><svg style="left:305px;top:13.6px" width="19" height="18" viewBox="0 0 19 18"><path d="M9.5 0.6 L12.2 6.3 L18.4 7 L13.8 11.2 L15.1 17.4 L9.5 14.3 L3.9 17.4 L5.2 11.2 L0.6 7 L6.8 6.3 Z" fill="#f0b90e"/></svg></div>
<div class="t" id="c1t" style="left:637.40px;top:509.00px;font-size:17.2px;font-weight:700;color:#333;letter-spacing:0.045px;">VILLA TRIFOLD</div>
<div class="t" id="c1s" style="left:637.40px;top:530.00px;font-size:13.3px;font-weight:400;color:#555;letter-spacing:-0.341px;">DEMO VA</div>
<div class="t" id="c1l0" style="left:637.40px;top:572.00px;font-size:13.3px;font-weight:400;color:#555;letter-spacing:0.048px;">NOVA Bauherr</div>
<div class="t" id="c1l1" style="left:637.40px;top:591.00px;font-size:13.3px;font-weight:400;color:#555;letter-spacing:0.438px;">64367 Mühltal</div>
<div class="t" id="c1l2" style="left:637.40px;top:633.00px;font-size:13.3px;font-weight:400;color:#555;letter-spacing:0.287px;">Alexanderplatz</div>
<div class="t" id="c1l3" style="left:637.40px;top:652.00px;font-size:13.3px;font-weight:400;color:#555;letter-spacing:-0.125px;">10178 Berlin</div>
<div class="a" style="left:636.4px;top:680.45px;width:20.6px;height:20.6px;border-radius:50%;background:#d5665c"></div>
<div class="t" id="c1av" style="left:640.70px;top:686.00px;font-size:8.6px;font-weight:400;color:#fff;letter-spacing:0.000px;">VA</div>
<div class="t" id="c1u" style="left:663.60px;top:684.00px;font-size:12.3px;font-weight:400;color:#555;letter-spacing:0.246px;">Viktoria Ageev</div>
<div class="t" id="c1d" style="left:637.60px;top:721.00px;font-size:12.3px;font-weight:400;color:#555;letter-spacing:0.337px;">24.06.2024 08:04</div>
<svg style="left:914px;top:725.4px" width="19" height="5" viewBox="0 0 19 5"><circle cx="2.3" cy="2.5" r="2.1" fill="#9a9a9a"/><circle cx="9.3" cy="2.5" r="2.1" fill="#9a9a9a"/><circle cx="16.3" cy="2.5" r="2.1" fill="#9a9a9a"/></svg>
<div class="a" style="left:985.7px;top:332px;width:336px;height:417.20000000000005px;border-radius:6px;background:#fff;box-shadow:0 8px 26px rgba(0,0,0,0.10),0 1px 4px rgba(0,0,0,0.04)"></div>
<div class="a" style="left:985.7px;top:332px;width:336px;height:152.6px;border-radius:6px 6px 0 0;overflow:hidden"><svg style="left:0;top:0" width="336" height="153" viewBox="0 0 336 153">
<defs><filter id="i2b"><feGaussianBlur stdDeviation="0.8"/></filter><filter id="i2c"><feGaussianBlur stdDeviation="4"/></filter>
<linearGradient id="i2sky" x1="0" y1="0" x2="1" y2="0"><stop offset="0" stop-color="#dcdcde"/><stop offset="0.3" stop-color="#d2d3df"/><stop offset="0.55" stop-color="#b0b8ea"/><stop offset="1" stop-color="#8a9af0"/></linearGradient>
<linearGradient id="i2sky2" x1="0" y1="0" x2="0" y2="1"><stop offset="0" stop-color="#9aa8ea" stop-opacity="0"/><stop offset="1" stop-color="#d8c6de"/></linearGradient>
<linearGradient id="i2wall" x1="0" y1="0" x2="1" y2="0"><stop offset="0" stop-color="#a09c98"/><stop offset="0.5" stop-color="#948f8a"/><stop offset="1" stop-color="#a09a94"/></linearGradient>
<linearGradient id="i2beam" x1="0" y1="0" x2="1" y2="0"><stop offset="0" stop-color="#cdb98a"/><stop offset="0.3" stop-color="#aaa390"/><stop offset="1" stop-color="#8f8c80"/></linearGradient>
<linearGradient id="i2win" x1="0" y1="0" x2="0" y2="1"><stop offset="0" stop-color="#e6d699"/><stop offset="0.5" stop-color="#d9b46c"/><stop offset="1" stop-color="#ead48a"/></linearGradient>
<filter color-interpolation-filters="sRGB" id="i2n" x="0" y="0" width="100%" height="100%"><feTurbulence type="fractalNoise" baseFrequency="0.12 0.14" numOctaves="3" seed="12" result="n"/>
<feColorMatrix in="n" type="matrix" values="2.2 0 0 0 -0.6  2.2 0 0 0 -0.6  2.2 0 0 0 -0.6  0 0 0 0 1"/>
<feComponentTransfer result="col"><feFuncR type="table" tableValues="0.08 0.14 0.27 0.45 0.62"/><feFuncG type="table" tableValues="0.11 0.18 0.31 0.47 0.62"/><feFuncB type="table" tableValues="0.05 0.08 0.12 0.16 0.25"/></feComponentTransfer>
<feTurbulence type="fractalNoise" baseFrequency="0.09" numOctaves="2" seed="3" result="dn"/>
<feDisplacementMap in="SourceGraphic" in2="dn" scale="8" xChannelSelector="R" yChannelSelector="G" result="shape"/>
<feComposite in="col" in2="shape" operator="in"/></filter>
<pattern id="i2str" width="3.4" height="10" patternUnits="userSpaceOnUse"><rect width="3.4" height="10" fill="none"/><rect x="0" width="0.9" height="10" fill="#6f6e6a" opacity="0.35"/></pattern>
</defs>
<rect width="336" height="153" fill="url(#i2sky)"/>
<rect x="250" width="86" height="100" fill="url(#i2sky2)"/>
<g filter="url(#i2b)">
<!-- sketch area -->
<rect x="0" y="0" width="92" height="153" fill="#e3e3e3"/>
<polygon points="0.0,40.5 57.8,53.2 57.8,120.7 0.0,120.7" fill="#dadad8"/>
<polygon points="0.0,120.7 96.1,120.7 96.1,152.9 0.0,152.9" fill="#d6d6d6"/>
<!-- upper left block -->
<polygon points="90.6,13.1 155.3,9.8 155.3,53.2 90.6,56.0" fill="#acaca8"/>
<polygon points="90.6,13.1 155.3,9.8 155.3,53.2 90.6,56.0" fill="url(#i2str)"/>
<!-- left lower window -->
<polygon points="62.3,56.0 126.1,56.0 126.1,119.8 62.3,119.8" fill="#55554e"/>
<polygon points="65.4,58.7 123.8,58.7 123.8,117.4 65.4,117.4" fill="#c0bcae"/>
<polygon points="65.4,58.7 88.8,58.7 88.8,117.4 65.4,117.4" fill="#d6d4ca"/>
<!-- frame around tall window -->
<polygon points="126.1,53.2 139.8,25.9 172.6,25.9 172.6,106.1 139.8,106.1 126.1,120.7" fill="#b4b6bf"/>
<polygon points="126.1,53.2 139.8,25.9 139.8,106.1 126.1,120.7" fill="#9c9c9e"/>
<polygon points="144.4,32.3 166.2,32.3 166.2,99.7 144.4,99.7" fill="url(#i2win)"/>
<!-- main concrete block -->
<polygon points="172.6,25.0 292.0,18.6 295.7,102.4 172.6,105.2" fill="url(#i2wall)"/>
<polygon points="172.6,25.0 292.0,18.6 295.7,102.4 172.6,105.2" fill="url(#i2str)"/>
<!-- cantilever underside -->
<polygon points="139.8,106.1 172.6,105.2 295.7,102.4 252.8,129.8 139.8,128.9" fill="url(#i2beam)"/>
<polygon points="141.6,120.7 203.6,120.7 203.6,129.8 141.6,129.8" fill="#f0d484" filter="url(#i2c)" opacity="0.75"/>
<!-- lower wall -->
<polygon points="96.1,128.9 225.5,128.9 225.5,140.7 96.1,140.7" fill="#c6c6cc"/>
<polygon points="96.1,139.8 212.7,139.8 212.7,152.9 96.1,152.9" fill="#e2c27c"/>
<polygon points="181.7,139.8 212.7,139.8 212.7,152.9 181.7,152.9" fill="#efcf86"/>
<polygon points="212.7,137.1 263.8,137.1 263.8,152.9 212.7,152.9" fill="#a39c9a"/>
<polygon points="214.5,133.4 229.1,133.4 229.1,152.9 214.5,152.9" fill="#cfcfd6"/>
<!-- trees -->
<polygon points="263.8,152.9 263.8,124.3 278.3,109.7 292.9,102.4 296.6,87.9 307.5,78.7 322.1,84.2 334.9,80.6 334.9,152.9" fill="#3f4a20"/>
<polygon points="296.6,87.9 307.5,78.7 322.1,84.2 334.9,80.6 334.9,102.4 314.8,106.1 300.2,102.4" fill="#2e3a1c"/>
<polygon points="267.4,138.9 285.6,120.7 314.8,117.0 334.9,124.3 334.9,152.9 267.4,152.9" fill="#59602a"/>
<polygon points="225.5,134.3 252.8,134.3 252.8,138.9 225.5,138.9" fill="#2a2f22"/>
<polygon points="263.8,166.2 263.8,124.3 278.3,109.7 292.9,102.4 296.6,87.9 307.5,78.7 322.1,84.2 334.9,80.6 356.7,80.6 356.7,166.2" fill="#000" filter="url(#i2n)"/>
<!-- sketch lines -->
<g stroke="#3a3a3a" stroke-width="0.8" fill="none" opacity="0.85">
<path d="M90.6 0 V153 M98.8 18 V153"/>
<path d="M0 38.6 H62 M0 55.0 L58 52.3 M0 62.3 L40 95.2 L95 80.6"/>
<path d="M57.8 36.8 V124.3 M0 122.5 H100 M0 131.6 L120 137.1"/>
<path d="M28.6 87.9 V153 M48.7 100.6 V153"/>
<path d="M64.2 56.9 L88.8 91.5"/>
<path d="M22 24 C24 8 40 2 52 1" />
</g>
<path d="M14 1.5 H85" stroke="#444" stroke-width="1.6" stroke-dasharray="9 3"/>
<path d="M136.2 0 V12 M170.8 0 V18" stroke="#333" stroke-width="1"/>
</g></svg><div class="a" style="left:303.2px;top:10.8px;width:60px;height:24px;border-radius:12px;background:#fff"></div></div>
<div class="t" id="c2t" style="left:1008.10px;top:509.00px;font-size:17.2px;font-weight:700;color:#333;letter-spacing:0.277px;">Haus Rheinberg</div>
<div class="t" id="c2s" style="left:1008.10px;top:530.00px;font-size:13.3px;font-weight:400;color:#555;letter-spacing:0.281px;">Mehrfamilienhausanlage</div>
<div class="t" id="c2l0" style="left:1008.10px;top:572.00px;font-size:13.3px;font-weight:400;color:#555;letter-spacing:0.112px;">Reiner Rheinberg</div>
<div class="t" id="c2l1" style="left:1008.10px;top:591.00px;font-size:13.3px;font-weight:400;color:#555;letter-spacing:0.442px;">60327 Darmstadt</div>
<div class="t" id="c2l2" style="left:1008.10px;top:633.00px;font-size:13.3px;font-weight:400;color:#555;letter-spacing:0.299px;">Meister Mühle</div>
<div class="t" id="c2l3" style="left:1008.10px;top:652.00px;font-size:13.3px;font-weight:400;color:#555;letter-spacing:0.501px;">64367 Mühtal</div>
<svg style="left:1007.4000000000001px;top:680.55px" width="20.4" height="20.4" viewBox="0 0 20.4 20.4">
<circle cx="10.2" cy="10.2" r="9.9" fill="#fdfdfd" stroke="#ececec" stroke-width="0.7"/>
<ellipse cx="10.15" cy="16.3" rx="7.5" ry="4" fill="#333"/>
<path d="M8.6 10.5 H11.9 V13.2 C11 13.9 9.5 13.9 8.6 13.2 Z" fill="#e8e8e8"/>
<path d="M7.7 6.4 C7.7 2.4 12.8 2.4 12.8 6.4 V9 C12.8 13.2 7.7 13.2 7.7 9 Z" fill="#8a8a8a"/>
<path d="M7.5 6.8 C7.3 2.2 13.2 2.2 13 6.8 C12.4 5.2 8.1 5.2 7.5 6.8 Z" fill="#2a2a2a"/>
<path d="M7.7 8.6 C8 13.6 12.5 13.6 12.8 8.6 C12.4 10.2 11.4 9.8 10.25 9.8 C9.1 9.8 8.1 10.2 7.7 8.6 Z" fill="#333"/></svg>
<div class="t" id="c2u" style="left:1034.30px;top:684.00px;font-size:12.3px;font-weight:400;color:#555;letter-spacing:-0.147px;">Felix Grau</div>
<div class="t" id="c2d" style="left:1008.30px;top:721.00px;font-size:12.3px;font-weight:400;color:#555;letter-spacing:0.184px;">03.04.2025 15:07</div>
<svg style="left:1284.7px;top:725.4px" width="19" height="5" viewBox="0 0 19 5"><circle cx="2.3" cy="2.5" r="2.1" fill="#9a9a9a"/><circle cx="9.3" cy="2.5" r="2.1" fill="#9a9a9a"/><circle cx="16.3" cy="2.5" r="2.1" fill="#9a9a9a"/></svg>
<div class="a" style="left:1356.3px;top:332px;width:336px;height:417.20000000000005px;border-radius:6px;background:#fff;box-shadow:0 8px 26px rgba(0,0,0,0.10),0 1px 4px rgba(0,0,0,0.04)"></div>
<div class="a" style="left:1356.3px;top:332px;width:336px;height:152.6px;border-radius:6px 6px 0 0;overflow:hidden"><svg style="left:0;top:0" width="336" height="153" viewBox="0 0 336 153">
<defs><filter id="i3b"><feGaussianBlur stdDeviation="0.9"/></filter><filter id="i3c"><feGaussianBlur stdDeviation="3"/></filter>
<linearGradient id="i3sky" x1="0" y1="0" x2="1" y2="0"><stop offset="0" stop-color="#3d7fd2"/><stop offset="0.55" stop-color="#4d8ad4"/><stop offset="1" stop-color="#9cc0e6"/></linearGradient>
<linearGradient id="i3m" x1="0" y1="0" x2="1" y2="1"><stop offset="0" stop-color="#8b8e96"/><stop offset="0.5" stop-color="#a2a4a8"/><stop offset="1" stop-color="#7d8088"/></linearGradient>
<linearGradient id="i3r" x1="0" y1="0" x2="0" y2="1"><stop offset="0" stop-color="#8e9098"/><stop offset="1" stop-color="#7a7f88"/></linearGradient>
</defs>
<rect width="336" height="153" fill="url(#i3sky)"/>
<g filter="url(#i3b)">
<!-- left side blue-ish face -->
<polygon points="35.9,0.0 96.1,0.0 21.3,109.7 0.0,120.7 0.0,95.2 15.9,47.8" fill="#3f5886"/>
<polygon points="48.7,4.0 74.2,1.3 54.1,29.5 30.4,40.5" fill="#56699a"/>
<polygon points="30.4,31.4 52.3,27.7 41.4,47.8 21.3,53.2" fill="#20283a"/>
<polygon points="14.0,69.6 28.6,66.0 21.3,80.6 10.4,84.2" fill="#1e2636"/>
<!-- main facade -->
<polygon points="96.1,0.0 128.9,1.3 150.7,29.5 176.3,47.8 194.5,69.6 194.5,78.7 158.0,106.1 110.6,124.3 48.7,118.8 21.3,109.7 54.1,53.2 81.5,13.1" fill="url(#i3m)"/>
<polygon points="112.5,18.6 127.1,31.4 110.6,60.5 92.4,45.0" fill="#646a6e"/>
<polygon points="143.5,49.6 158.0,62.3 148.9,87.9 128.9,75.1" fill="#6d7276"/>
<polygon points="77.8,66.0 95.2,77.8 79.7,107.0 57.8,96.1" fill="#697074"/>
<polygon points="117.9,91.5 138.0,97.0 128.9,111.6 108.8,109.7" fill="#7b8084"/>
<polygon points="150.7,31.4 165.3,45.9 165.3,53.2 148.9,36.8" fill="#7a7e84"/>
<!-- right building -->
<polygon points="196.3,29.5 218.2,11.3 236.4,9.5 278.3,13.1 307.5,29.5 335.2,47.8 335.2,152.9 294.8,152.9 267.4,109.7 240.1,78.7 212.7,69.6 196.3,66.0" fill="url(#i3r)"/>
<polygon points="169.0,36.8 200.0,31.4 200.0,66.0 187.2,69.6 176.3,47.8" fill="#a0a2a6"/>
<polygon points="178.1,38.6 195.4,35.9 195.4,45.9 179.0,47.8" fill="#4e565e"/>
<polygon points="207.3,26.8 221.8,21.3 223.7,33.2 209.1,38.6" fill="#59616a"/>
<polygon points="211.8,48.7 229.1,42.3 231.9,62.3 213.6,66.9" fill="#525a62"/>
<polygon points="236.4,14.0 254.6,12.2 255.6,16.8 237.3,20.4" fill="#59616a"/>
<polygon points="241.9,34.1 259.2,27.7 263.8,47.8 245.5,53.2" fill="#545c64"/>
<polygon points="251.9,67.8 271.1,60.5 278.3,82.4 258.3,89.7" fill="#4f575f"/>
<polygon points="276.5,25.0 292.9,26.8 300.2,38.6 282.0,38.6" fill="#6a7078"/>
<polygon points="289.3,53.2 309.3,49.6 320.3,67.8 298.4,73.3" fill="#58606a"/>
<polygon points="305.7,87.9 327.6,82.4 335.2,100.6 335.2,109.7 314.8,111.6" fill="#555d66"/>
<polygon points="263.8,106.1 283.8,98.8 292.9,117.0 278.3,124.3" fill="#5a626a"/>
<polygon points="318.4,117.0 335.2,109.7 335.2,128.0" fill="#d8dce2"/>
<!-- dark canopy -->
<polygon points="0.0,113.4 21.3,109.7 48.7,118.8 110.6,125.2 158.0,107.0 190.8,84.2 214.5,70.5 240.1,78.7 267.4,109.7 294.8,152.9 0.0,152.9" fill="#231f1c"/>
<path d="M0.0 112.5 L21.3 109.7 L48.7 118.8 L110.6 124.7 L158.0 107.0 L190.8 85.1 L214.5 71.5" fill="none" stroke="#70747c" stroke-width="3" opacity="0.8"/>
<polygon points="176.3,47.8 200.0,66.0 214.5,69.6 240.1,78.7 214.5,73.3 190.8,85.1 158.0,107.0 158.0,95.2 187.2,73.3" fill="#888b92"/>
<polygon points="190.8,78.7 214.5,68.7 238.2,75.1 249.2,91.5 220.0,87.9 194.5,95.2" fill="#6a6f78"/>
<path d="M110.6 127.1 Q158.0 118.8 187.2 99.7 T231.0 92.4 Q258.3 102.4 300.2 157.1" fill="none" stroke="#33312f" stroke-width="9"/>
<path d="M110.6 123.4 Q158.0 115.2 187.2 96.1 T231.0 88.2 Q260.1 98.8 303.9 153.5" fill="none" stroke="#9a9ea4" stroke-width="2.2"/>
<polygon points="158.0,120.7 212.7,95.2 245.5,98.8 278.3,152.9 158.0,152.9" fill="#2c2420" filter="url(#i3c)"/>
<!-- ground floor -->
<polygon points="0.0,137.1 70.5,133.4 176.3,137.1 231.0,152.9 0.0,152.9" fill="#8c8d88"/>
<polygon points="0.0,113.4 17.7,111.6 30.4,124.3 54.1,135.3 0.0,138.9" fill="#3c3a36"/>
<polygon points="17.7,144.4 43.2,143.5 43.2,152.9 17.7,152.9" fill="#3e444a"/>
<polygon points="88.8,137.1 143.5,138.0 143.5,152.9 86.9,152.9" fill="#4b5358"/>
<polygon points="176.3,143.5 221.8,148.0 229.1,152.9 176.3,152.9" fill="#3c4248"/>
<polygon points="48.7,137.1 66.9,137.1 63.3,152.9 46.8,152.9" fill="#5a5e62"/>
</g></svg><div class="a" style="left:303.2px;top:10.8px;width:60px;height:24px;border-radius:12px;background:#fff"></div></div>
<div class="t" id="c3t" style="left:1378.70px;top:509.00px;font-size:17.2px;font-weight:700;color:#333;letter-spacing:0.110px;">Kölner Dom</div>
<div class="t" id="c3s" style="left:1378.70px;top:530.00px;font-size:13.3px;font-weight:400;color:#555;letter-spacing:0.234px;">Kalkulation</div>
<div class="t" id="c3l0" style="left:1378.70px;top:572.00px;font-size:13.3px;font-weight:400;color:#555;letter-spacing:0.202px;">Der Kölner Bischof</div>
<div class="t" id="c3l1" style="left:1378.70px;top:613.00px;font-size:13.3px;font-weight:400;color:#555;letter-spacing:0.087px;">Kölner Dom</div>
<div class="t" id="c3l2" style="left:1378.70px;top:633.00px;font-size:13.3px;font-weight:400;color:#555;letter-spacing:0.300px;">50667 Köln</div>
<svg style="left:1378.0px;top:680.55px" width="20.4" height="20.4" viewBox="0 0 20.4 20.4">
<circle cx="10.2" cy="10.2" r="9.9" fill="#fdfdfd" stroke="#ececec" stroke-width="0.7"/>
<ellipse cx="10.15" cy="16.3" rx="7.5" ry="4" fill="#333"/>
<path d="M8.6 10.5 H11.9 V13.2 C11 13.9 9.5 13.9 8.6 13.2 Z" fill="#e8e8e8"/>
<path d="M7.7 6.4 C7.7 2.4 12.8 2.4 12.8 6.4 V9 C12.8 13.2 7.7 13.2 7.7 9 Z" fill="#8a8a8a"/>
<path d="M7.5 6.8 C7.3 2.2 13.2 2.2 13 6.8 C12.4 5.2 8.1 5.2 7.5 6.8 Z" fill="#2a2a2a"/>
<path d="M7.7 8.6 C8 13.6 12.5 13.6 12.8 8.6 C12.4 10.2 11.4 9.8 10.25 9.8 C9.1 9.8 8.1 10.2 7.7 8.6 Z" fill="#333"/></svg>
<div class="t" id="c3u" style="left:1404.90px;top:684.00px;font-size:12.3px;font-weight:400;color:#555;letter-spacing:-0.147px;">Felix Grau</div>
<div class="t" id="c3d" style="left:1378.90px;top:721.00px;font-size:12.3px;font-weight:400;color:#555;letter-spacing:0.064px;">30.10.2023 16:22</div>
<svg style="left:1655.3px;top:725.4px" width="19" height="5" viewBox="0 0 19 5"><circle cx="2.3" cy="2.5" r="2.1" fill="#9a9a9a"/><circle cx="9.3" cy="2.5" r="2.1" fill="#9a9a9a"/><circle cx="16.3" cy="2.5" r="2.1" fill="#9a9a9a"/></svg>
<div class="a" style="left:1727px;top:332px;width:336px;height:417.20000000000005px;border-radius:6px;background:#fff;box-shadow:0 8px 26px rgba(0,0,0,0.10),0 1px 4px rgba(0,0,0,0.04)"></div>
<div class="a" style="left:1727px;top:332px;width:336px;height:152.6px;border-radius:6px 6px 0 0;overflow:hidden"><svg style="left:0;top:0" width="336" height="153" viewBox="0 0 336 153">
<defs><filter id="i4b"><feGaussianBlur stdDeviation="0.8"/></filter><filter id="i4c"><feGaussianBlur stdDeviation="3"/></filter>
<filter color-interpolation-filters="sRGB" id="i4n" x="0" y="0" width="100%" height="100%"><feTurbulence type="fractalNoise" baseFrequency="0.13 0.15" numOctaves="3" seed="7" result="n"/>
<feColorMatrix in="n" type="matrix" values="2.1 0 0 0 -0.55  2.1 0 0 0 -0.55  2.1 0 0 0 -0.55  0 0 0 0 1"/>
<feComponentTransfer><feFuncR type="table" tableValues="0.15 0.22 0.38 0.56 0.68"/><feFuncG type="table" tableValues="0.21 0.30 0.48 0.66 0.76"/><feFuncB type="table" tableValues="0.10 0.13 0.19 0.25 0.36"/></feComponentTransfer>
<feComponentTransfer result="col"><feFuncA type="identity"/></feComponentTransfer>
<feTurbulence type="fractalNoise" baseFrequency="0.09" numOctaves="2" seed="3" result="dn"/>
<feDisplacementMap in="SourceGraphic" in2="dn" scale="9" xChannelSelector="R" yChannelSelector="G" result="shape"/>
<feComposite in="col" in2="shape" operator="in"/></filter>
</defs>
<rect width="336" height="153" fill="#f8f8f8"/>
<ellipse cx="22" cy="18" rx="16" ry="7" fill="#e2e2e2" filter="url(#i4c)"/>
<ellipse cx="40" cy="24" rx="8" ry="5" fill="#dcdcdc" filter="url(#i4c)"/>
<g filter="url(#i4b)">
<g filter="url(#i4n)">
<polygon points="-11.5,98.7 -0.1,98.7 6.5,83.2 11.7,74.2 24.6,70.3 45.2,72.9 58.1,75.5 63.2,83.2 86.4,88.4 107.0,101.3 107.0,121.9 100.6,165.7 -11.5,165.7" fill="#000"/>
<polygon points="145.1,-12.2 237.2,-12.2 237.2,165.7 122.5,165.7 127.7,121.9 127.7,96.1 128.9,53.6 135.4,25.2" fill="#000"/>
</g>
<polygon points="2.6,101.3 9.1,85.8 24.6,76.8 55.5,80.6 104.5,105.1 99.3,152.8 -0.1,152.8" fill="#3c4636" opacity="0.28" filter="url(#i4c)"/>
<g stroke="#b9bcae" stroke-width="1.6" opacity="0.75" fill="none">
<path d="M15.5 80.6 L104.5 106.4"/>
<path d="M11.7 97.4 L101.9 121.9"/>
<path d="M2.6 128.3 L89.0 138.6"/>
<path d="M7.8 116.7 L63.2 127.0"/>
</g>
<polygon points="91.6,129.6 103.2,132.2 100.6,152.8 89.0,152.8" fill="#8d8f80"/>
<polygon points="179.2,22.6 193.0,16.2 220.5,12.3 220.5,42.0 184.4,42.0 176.6,36.8" fill="#8b8c7c" opacity="0.8"/>
<polygon points="161.2,5.9 167.6,5.9 158.6,36.8 153.4,36.8" fill="#9aa090" opacity="0.7"/>
<polygon points="171.5,53.6 179.2,47.1 174.1,70.3 166.3,72.9" fill="#9aa090" opacity="0.6"/>
<polygon points="163.7,75.5 174.1,75.5 171.5,96.1 162.5,96.1" fill="#8a8c7a" opacity="0.6"/>
<polygon points="132.8,109.0 145.7,114.2 143.1,152.8 127.7,152.8" fill="#7a8a5a" opacity="0.7"/>
</g></svg><div class="a" style="left:303.2px;top:10.8px;width:60px;height:24px;border-radius:12px;background:#fff"></div></div>
<div class="t" id="c4t" style="left:1749.40px;top:509.00px;font-size:17.2px;font-weight:700;color:#333;letter-spacing:1.456px;">BIM360-001</div>
<div class="t" id="c4s" style="left:1749.40px;top:530.00px;font-size:13.3px;font-weight:400;color:#555;letter-spacing:0.247px;">Goldbacher Straße</div>
<div class="t" id="c4l0" style="left:1749.40px;top:572.00px;font-size:13.3px;font-weight:400;color:#555;letter-spacing:0.353px;">Messe Frankfurt</div>
<div class="t" id="c4l1" style="left:1749.40px;top:613.00px;font-size:13.3px;font-weight:400;color:#555;letter-spacing:0.353px;">Messe Frankfurt</div>
<div class="t" id="c4l2" style="left:1749.40px;top:633.00px;font-size:13.3px;font-weight:400;color:#555;letter-spacing:0.370px;">60327 Frankfurt am Main</div>
<svg style="left:1748.7px;top:698.8px" width="20.4" height="20.4" viewBox="0 0 20.4 20.4">
<defs><clipPath id="avc1748"><circle cx="10.2" cy="10.2" r="9.9"/></clipPath>
<linearGradient id="avg1748" x1="0" y1="0" x2="1" y2="0"><stop offset="0" stop-color="#bdbdbd"/><stop offset="0.35" stop-color="#e2e2e2"/><stop offset="1" stop-color="#ededed"/></linearGradient></defs>
<circle cx="10.2" cy="10.2" r="9.9" fill="url(#avg1748)"/>
<g clip-path="url(#avc1748)"><ellipse cx="10.4" cy="19.8" rx="8" ry="5.2" fill="#1b1b1b"/>
<path d="M8.8 12 H12 V15.6 C11 16.4 9.8 16.4 8.8 15.6 Z" fill="#c49a7e"/>
<ellipse cx="10.4" cy="9" rx="3.3" ry="4.3" fill="#c9a083"/><path d="M7 8.2 C6.8 2.8 14 2.8 13.8 8.2 C12.8 5.6 8 5.6 7 8.2 Z" fill="#4a3426"/>
<path d="M7.6 10.6 C8.2 14.6 12.6 14.6 13.2 10.6 C12.4 12.6 8.4 12.6 7.6 10.6 Z" fill="#8a6248" opacity="0.7"/></g></svg>
<div class="t" id="c4u" style="left:1775.60px;top:702.00px;font-size:12.3px;font-weight:400;color:#555;letter-spacing:0.087px;">Sven Walter</div>
</div>
</body></html>
